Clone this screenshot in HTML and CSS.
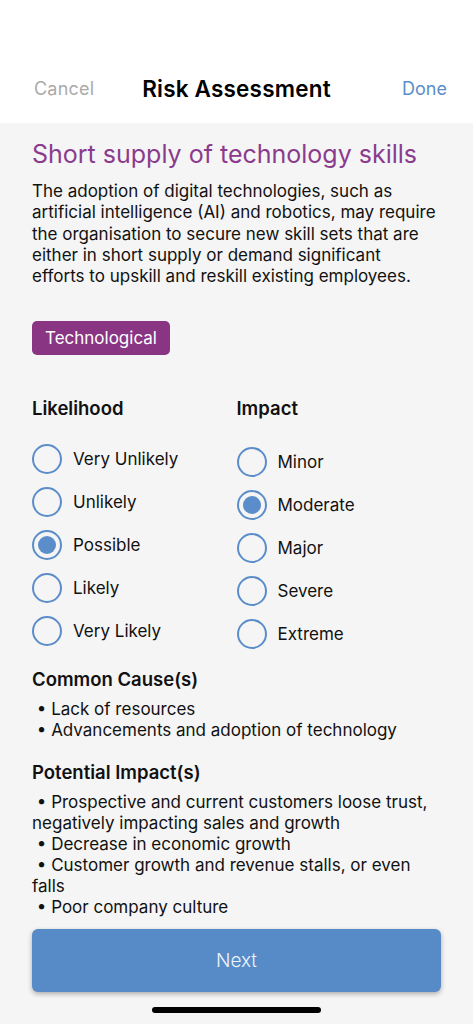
FILE: index.html
```html
<html lang="en">
<head>
    <meta charset="UTF-8">
    <meta name="viewport" content="width=device-width, initial-scale=1.0">
    <title>Risk Assessment</title>
    <link rel="stylesheet" href="styles.css">
</head>
<body>
    <div class="topbar">
        <span class="navbtn cancel">Cancel</span>
        <span class="navtitle">Risk Assessment</span>
        <span class="navbtn done">Done</span>
    </div>

    <div class="main">
        <h1 class="risk-title">Short supply of technology skills</h1>
        <p class="risk-desc">The adoption of digital technologies, such as<br>artificial intelligence (AI) and robotics, may require<br>the organisation to secure new skill sets that are<br>either in short supply or demand significant<br>efforts to upskill and reskill existing employees.</p>

        <span class="tag">Technological</span>

        <div class="ratings">
            <div class="col">
                <h2 class="label">Likelihood</h2>
                <div class="option"><span class="radio"></span>Very Unlikely</div>
                <div class="option"><span class="radio"></span>Unlikely</div>
                <div class="option"><span class="radio checked"></span>Possible</div>
                <div class="option"><span class="radio"></span>Likely</div>
                <div class="option"><span class="radio"></span>Very Likely</div>
            </div>
            <div class="col impact">
                <h2 class="label">Impact</h2>
                <div class="option"><span class="radio"></span>Minor</div>
                <div class="option"><span class="radio checked"></span>Moderate</div>
                <div class="option"><span class="radio"></span>Major</div>
                <div class="option"><span class="radio"></span>Severe</div>
                <div class="option"><span class="radio"></span>Extreme</div>
            </div>
        </div>

        <h2 class="label section causes">Common Cause(s)</h2>
        <p class="bullets"> &bull; Lack of resources<br> &bull; Advancements and adoption of technology</p>

        <h2 class="label section">Potential Impact(s)</h2>
        <p class="bullets"> &bull; Prospective and current customers loose trust, negatively impacting sales and growth<br> &bull; Decrease in economic growth<br> &bull; Customer growth and revenue stalls, or even falls<br> &bull; Poor company culture</p>
    </div>

    <div class="footer">
        <div class="nextbtn">Next</div>
        <div class="homebar"></div>
    </div>
</body>
</html>
```

FILE: styles.css
```css
body {
  margin: 0;
  width: 473px;
  height: 1024px;
  overflow: hidden;
  background-color: #f5f5f5;
  font-family: Inter, "Noto Sans", sans-serif;
  color: #111;
  position: relative;
}

.topbar {
  background-color: #fff;
  height: 123px;
  padding: 70px 30px 0 30px;
  box-sizing: border-box;
  display: grid;
  grid-template-columns: 1fr auto 1fr;
  align-items: start;
}

.navbtn {
  font-size: 18px;
  line-height: 38px;
}
.cancel {
  color: #aaaaaa;
  padding-left: 4px;
  letter-spacing: 0.2px;
}
.done {
  color: #5b8dca;
  text-align: right;
  margin-right: -4px;
}

.navtitle {
  font-size: 22.5px;
  font-weight: 600;
  line-height: 38px;
  color: #000;
  letter-spacing: 0.2px;
}

.main {
  padding: 14px 32px 0 32px;
}

.risk-title {
  margin: 0;
  font-size: 25px;
  font-weight: 400;
  line-height: 34px;
  color: #8b3b8e;
}

.risk-desc {
  margin: 10px 0 0 0;
  font-size: 17px;
  line-height: 21.25px;
}

.tag {
  display: inline-block;
  margin-top: 34px;
  background-color: #8a3584;
  color: #fff;
  font-size: 17px;
  line-height: 34px;
  padding: 0 13px;
  border-radius: 5px;
}

.ratings {
  display: flex;
  margin-top: 41px;
}

.col {
  width: 205px;
  display: flex;
  flex-direction: column;
  gap: 13px;
}

.label {
  margin: 0 0 11px 0;
  font-size: 18.5px;
  font-weight: 600;
  line-height: 24px;
}

.option {
  display: flex;
  align-items: center;
  gap: 11px;
  height: 30px;
  font-size: 17px;
}
.impact .option {
  position: relative;
  top: 3px;
}

.radio {
  width: 30px;
  height: 30px;
  box-sizing: border-box;
  border: 2px solid #5b8dca;
  border-radius: 50%;
  display: flex;
  align-items: center;
  justify-content: center;
}
.radio.checked::after {
  content: "";
  width: 18px;
  height: 18px;
  border-radius: 50%;
  background-color: #5b8dca;
}

.section {
  margin-top: 19px;
  margin-bottom: 8px;
}
.section.causes {
  margin-top: 21px;
}

.bullets {
  margin: 0;
  font-size: 17px;
  line-height: 21px;
  white-space: pre-wrap;
}

.footer {
  position: absolute;
  left: 0;
  right: 0;
  bottom: 0;
  padding: 0 32px;
}

.nextbtn {
  height: 63px;
  background-color: #578bc7;
  border-radius: 6px;
  box-shadow: 0 2px 5px rgba(0, 0, 0, 0.3);
  color: #eef3fa;
  font-size: 19px;
  font-weight: 300;
  display: flex;
  align-items: center;
  justify-content: center;
}

.homebar {
  width: 169px;
  height: 6px;
  background-color: #000;
  border-radius: 3px;
  margin: 15px auto 11px auto;
}
```
